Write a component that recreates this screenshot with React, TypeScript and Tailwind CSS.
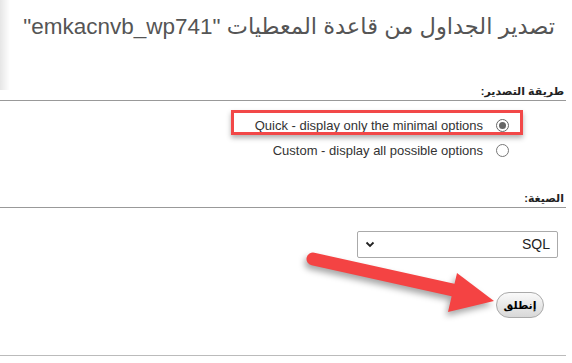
import React from "react";

const font = { fontFamily: '"Liberation Sans", "DejaVu Sans", Arial, sans-serif' };

function Radio({ checked }: { checked?: boolean }) {
  return (
    <span
      className={
        "flex h-[13px] w-[13px] items-center justify-center rounded-full border bg-white " +
        (checked ? "border-[#666]" : "border-[#777]")
      }
    >
      {checked && <span className="h-[7px] w-[7px] rounded-full bg-[#666]" />}
    </span>
  );
}

function OptionRow({ label, checked }: { label: string; checked?: boolean }) {
  return (
    <div className="flex h-[25px] items-center gap-[13px] pr-[57px]">
      <Radio checked={checked} />
      <span dir="ltr" className="text-[13px] text-[#333]">
        {label}
      </span>
    </div>
  );
}

function FieldLabel({ children }: { children: React.ReactNode }) {
  return (
    <div className="flex h-[19px] items-center border-b border-[#999] pr-[2px] text-[11px] font-bold leading-none text-[#222]">
      {children}
    </div>
  );
}

function Arrow() {
  return (
    <svg
      className="pointer-events-none absolute left-0 top-0"
      width="572"
      height="363"
      style={{ filter: "drop-shadow(-2px 4px 3px rgba(0,0,0,0.35))" }}
    >
      <line x1="313" y1="259" x2="462" y2="292" stroke="#f44343" strokeWidth="13" strokeLinecap="round" />
      <polygon points="457,273 494,301 448,312" fill="#f44343" />
    </svg>
  );
}

export default function App() {
  return (
    <div dir="rtl" className="relative h-[363px] w-[572px] overflow-hidden bg-white" style={font}>
      <div className="absolute left-0 top-0 h-[90px] w-[10px] bg-gradient-to-r from-[#e6e6e6] to-transparent" />

      <div className="flex flex-col pl-0 pr-[6px]">
        <h2 className="mt-[12px] h-[30px] whitespace-nowrap pr-[11px] text-[22.5px] leading-[30px] text-[#555]">
          تصدير الجداول من قاعدة المعطيات "emkacnvb_wp741"
        </h2>

        <div className="mt-[40px]">
          <FieldLabel>طريقة التصدير:</FieldLabel>
        </div>

        <div className="flex flex-col pt-[12px]">
          <OptionRow label="Quick - display only the minimal options" checked />
          <OptionRow label="Custom - display all possible options" />
        </div>

        <div className="mt-[26px]">
          <FieldLabel>الصيغة:</FieldLabel>
        </div>

        <div className="mr-[8px] mt-[23px] flex h-[27px] w-[201px] items-center justify-between rounded-[2px] border border-[#aaa] bg-white px-[7px]">
          <span className="text-[14px] text-[#222]">SQL</span>
          <svg width="10" height="7" viewBox="0 0 10 7">
            <path d="M1.5 1.5 L5 5 L8.5 1.5" fill="none" stroke="#222" strokeWidth="1.8" />
          </svg>
        </div>

        <div className="mr-[22px] mt-[34px] flex">
          <button className="flex h-[26px] w-[48px] items-center justify-center rounded-full border border-[#aaa] bg-gradient-to-b from-[#fafafa] to-[#d8d8d8] text-[11px] font-bold text-black">
            إنطلق
          </button>
        </div>

        <div className="mt-[37px] border-b border-[#bbb]" />
      </div>

      <div className="pointer-events-none absolute left-[231px] top-[110px] h-[25px] w-[292px] border-[3px] border-[#f24848] shadow-[0_3px_5px_rgba(0,0,0,0.3)]" />
      <Arrow />
    </div>
  );
}
